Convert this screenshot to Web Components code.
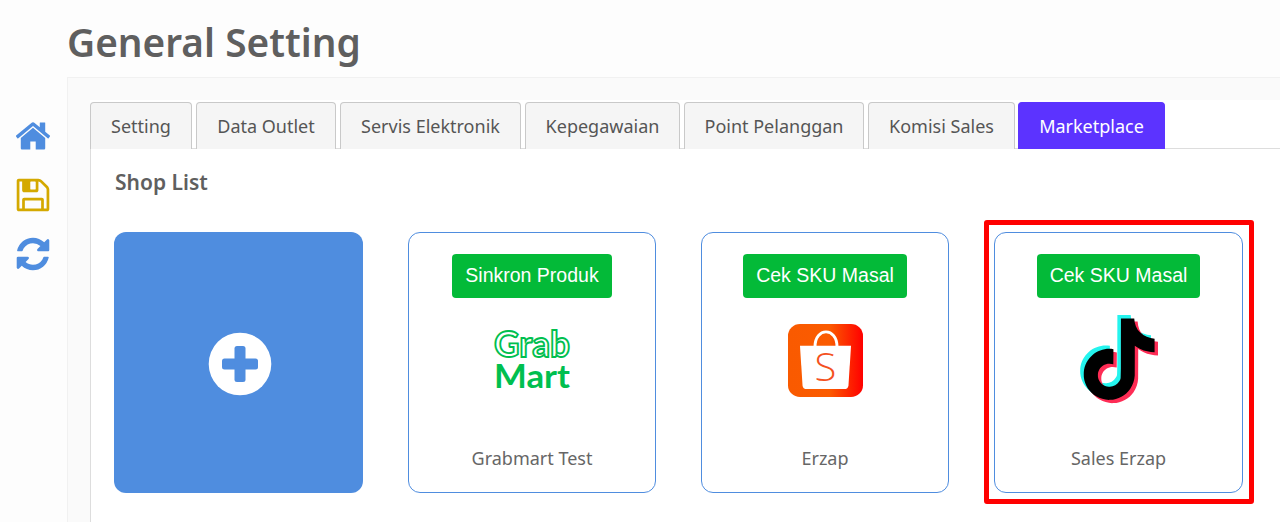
<!DOCTYPE html>
<html>
<head>
<meta charset="utf-8">
<title>General Setting</title>
<style>
  html, body { margin: 0; height: 522px; overflow: hidden; }
  body { background: #fdfdfd; color: #5f5f5f; font-family: "Noto Sans", sans-serif; }
</style>
</head>
<body>
<setting-page>
  <span slot="title">General Setting</span>
  <side-rail slot="rail"></side-rail>
  <tab-bar slot="tabs">
    <tab-item>Setting</tab-item>
    <tab-item>Data Outlet</tab-item>
    <tab-item>Servis Elektronik</tab-item>
    <tab-item>Kepegawaian</tab-item>
    <tab-item>Point Pelanggan</tab-item>
    <tab-item>Komisi Sales</tab-item>
    <tab-item active>Marketplace</tab-item>
  </tab-bar>
  <shop-list slot="content">
    <span slot="heading">Shop List</span>
    <shop-add></shop-add>
    <shop-card action="Sinkron Produk" name="Grabmart Test" logo="grab"></shop-card>
    <shop-card action="Cek SKU Masal" name="Erzap" logo="shopee"></shop-card>
    <shop-card action="Cek SKU Masal" name="Sales Erzap" logo="tiktok" marked></shop-card>
  </shop-list>
</setting-page>

<script>
class SettingPage extends HTMLElement {
    constructor() {
        super();
        this._shadowRoot = this.attachShadow({mode: "open"});
        this._shadowRoot.innerHTML = `
            <style>
                :host { display: block; height: 522px; overflow: hidden; }
                h1 {
                    margin: 0;
                    height: 77px;
                    padding-left: 67px;
                    box-sizing: border-box;
                    font-size: 38.8px;
                    line-height: 84px;
                    font-weight: 600;
                    color: #5f5f5f;
                }
                .body { display: flex; }
                .rail { flex: 0 0 65px; padding-right: 2px; }
                .panel {
                    flex: 1;
                    height: 445px;
                    box-sizing: border-box;
                    background: #fafafa;
                    border: solid #f1f1f1;
                    border-width: 1px 0 0 1px;
                    padding: 22px 0 0 22px;
                }
                .sheet {
                    display: flex;
                    flex-direction: column;
                    background: #fff;
                    height: 100%;
                    padding-top: 2px;
                    box-sizing: border-box;
                }
                .content { flex: 1; border-left: 1px solid #ddd; }
            </style>
            <h1><slot name="title"></slot></h1>
            <div class="body">
                <div class="rail"><slot name="rail"></slot></div>
                <div class="panel">
                    <div class="sheet">
                        <slot name="tabs"></slot>
                        <div class="content"><slot name="content"></slot></div>
                    </div>
                </div>
            </div>
        `;
    }
}

class SideRail extends HTMLElement {
    constructor() {
        super();
        this._shadowRoot = this.attachShadow({mode: "open"});
        this._shadowRoot.innerHTML = `
            <style>
                :host { display: flex; flex-direction: column; align-items: center; gap: 21px; padding-top: 40px; }
                svg { display: block; width: 38px; height: 38px; }
            </style>
            <svg viewBox="0 0 1792 1792" fill="#4f8ddf"><path d="M1472 992v480q0 26-19 45t-45 19h-384v-384h-256v384h-384q-26 0-45-19t-19-45v-480q0-1 .5-3t.5-3l575-474 575 474q1 2 1 6zm223-69l-62 74q-8 9-21 11h-3q-13 0-21-7l-692-577-692 577q-12 8-24 7-13-2-21-11l-62-74q-8-10-7-23.5t11-21.5l719-599q32-26 76-26t76 26l244 204v-195q0-14 9-23t23-9h192q14 0 23 9t9 23v408l219 182q10 8 11 21.5t-7 23.5z"/></svg>
            <svg viewBox="0 0 1792 1792" fill="#d4a900"><path d="M512 1536h768v-384h-768v384zm896 0h128v-896q0-14-10-38.5t-20-34.5l-281-281q-10-10-34-20t-39-10v416q0 40-28 68t-68 28h-576q-40 0-68-28t-28-68v-416h-128v1280h128v-416q0-40 28-68t68-28h832q40 0 68 28t28 68v416zm-384-928v-320q0-13-9.5-22.5t-22.5-9.5h-192q-13 0-22.5 9.5t-9.5 22.5v320q0 13 9.5 22.5t22.5 9.5h192q13 0 22.5-9.5t9.5-22.5zm640 32v928q0 40-28 68t-68 28h-1344q-40 0-68-28t-28-68v-1344q0-40 28-68t68-28h928q40 0 88 20t76 48l280 280q28 28 48 76t20 88z"/></svg>
            <svg viewBox="0 0 1792 1792" fill="#4f8ddf"><path d="M1639 1056q0 5-1 7-64 268-268 434.5t-478 166.5q-146 0-282.500-55t-243.500-157l-129 129q-19 19-45 19t-45-19-19-45v-448q0-26 19-45t45-19h448q26 0 45 19t19 45-19 45l-137 137q71 66 161 102t187 36q134 0 250-65t186-179q11-17 53-117 8-23 30-23h192q13 0 22.500 9.500t9.500 22.500zm25-800v448q0 26-19 45t-45 19h-448q-26 0-45-19t-19-45 19-45l138-138q-148-137-349-137-134 0-250 65t-186 179q-11 17-53 117-8 23-30 23h-199q-13 0-22.500-9.500t-9.500-22.500v-7q65-268 270-434.500t480-166.500q146 0 284 55.500t245 156.500l130-129q19-19 45-19t45 19 19 45z"/></svg>
        `;
    }
}

class TabBar extends HTMLElement {
    constructor() {
        super();
        this._shadowRoot = this.attachShadow({mode: "open"});
        this._shadowRoot.innerHTML = `
            <style>
                :host {
                    display: grid;
                    grid-template-columns: 102px 140px 181px 155px 180px 147px 146px;
                    column-gap: 4px;
                    justify-content: start;
                    height: 47px;
                    box-sizing: border-box;
                    border-bottom: 1px solid #ddd;
                }
            </style>
            <slot></slot>
        `;
    }
}

class TabItem extends HTMLElement {
    constructor() {
        super();
        this._shadowRoot = this.attachShadow({mode: "open"});
        this._shadowRoot.innerHTML = `
            <style>
                :host {
                    display: block;
                    height: 47px;
                    box-sizing: border-box;
                    background: #f5f5f5;
                    border: 1px solid #c9c9c9;
                    border-bottom: 0;
                    border-radius: 4px 4px 0 0;
                    font-size: 18px;
                    line-height: 47px;
                    text-align: center;
                    color: #555;
                    white-space: nowrap;
                }
                :host([active]) {
                    margin-left: -1px;
                    background: #5c33ff;
                    border-color: #5c33ff;
                    color: #fff;
                }
            </style>
            <slot></slot>
        `;
    }
}

class ShopList extends HTMLElement {
    constructor() {
        super();
        this._shadowRoot = this.attachShadow({mode: "open"});
        this._shadowRoot.innerHTML = `
            <style>
                :host { display: block; padding: 0 23px; }
                h2 { margin: 0; height: 83px; padding-left: 1px; font-size: 21px; line-height: 66px; font-weight: 600; color: #5f5f5f; }
                .grid { display: grid; grid-template-columns: 249px 248px 248px 249px; gap: 45px; }
            </style>
            <h2><slot name="heading"></slot></h2>
            <div class="grid"><slot></slot></div>
        `;
    }
}

class ShopAdd extends HTMLElement {
    constructor() {
        super();
        this._shadowRoot = this.attachShadow({mode: "open"});
        this._shadowRoot.innerHTML = `
            <style>
                :host {
                    display: flex;
                    align-items: center;
                    justify-content: center;
                    height: 261px;
                    box-sizing: border-box;
                    padding: 2px 0 0 3px;
                    background: #4f8ddf;
                    border-radius: 12px;
                }
                svg { width: 64px; height: 64px; }
            </style>
            <svg viewBox="0 0 64 64">
                <circle cx="32" cy="32" r="31.3" fill="#fff"/>
                <rect x="14" y="26.500" width="36" height="11" rx="2.500" fill="#4f8ddf"/>
                <rect x="26.500" y="14" width="11" height="36" rx="2.500" fill="#4f8ddf"/>
            </svg>
        `;
    }
}

const LOGOS = {
    grab: `
        <svg width="80" height="80" viewBox="0 0 80 80">
            <text x="40" y="37" text-anchor="middle" textLength="76" lengthAdjust="spacingAndGlyphs"
                font-family="Lato, sans-serif" font-weight="700" font-size="36"
                fill="#fff" stroke="#00bf4f" stroke-width="1.900">Grab</text>
            <text x="40" y="67.500" text-anchor="middle" textLength="76" lengthAdjust="spacingAndGlyphs"
                font-family="Lato, sans-serif" font-weight="700" font-size="33" fill="#00bf4f">Mart</text>
        </svg>`,
    shopee: `
        <svg width="75" height="73" viewBox="0 0 75 74" preserveAspectRatio="none" style="margin-top:1px">
            <defs>
                <linearGradient id="shopeeBg" x1="0" x2="1" y1="0" y2="0">
                    <stop offset="0" stop-color="#f95a00"/>
                    <stop offset=".55" stop-color="#fb5b00"/>
                    <stop offset="1" stop-color="#ff0000"/>
                </linearGradient>
            </defs>
            <rect width="75" height="74" rx="12" fill="url(#shopeeBg)"/>
            <path d="M27 23c0-20 22-20 22 0" fill="none" stroke="#fff" stroke-width="3"/>
            <path d="M12 22h51l-2.500 40q-.3 4-4.500 4h-37q-4.200 0-4.500-4z" fill="#fff"/>
            <text x="37.500" y="58" text-anchor="middle" font-family="'Open Sans', sans-serif" font-weight="300" font-size="40" fill="#f4511e">S</text>
        </svg>`,
    tiktok: `
        <svg width="90" height="90" viewBox="0 0 26.500 26.500">
            <defs>
                <path id="ttNote" d="M12.525.02c1.31-.02 2.61-.01 3.91-.02.08 1.53.63 3.09 1.75 4.17 1.12 1.11 2.7 1.62 4.24 1.79v4.03c-1.44-.05-2.89-.35-4.2-.97-.57-.26-1.1-.59-1.62-.93-.01 2.92.01 5.84-.02 8.75-.08 1.4-.54 2.79-1.35 3.94-1.31 1.92-3.58 3.17-5.91 3.21-1.43.08-2.86-.31-4.08-1.03-2.02-1.19-3.44-3.37-3.65-5.71-.02-.5-.03-1-.01-1.49.18-1.9 1.12-3.72 2.58-4.96 1.66-1.44 3.98-2.13 6.15-1.72.02 1.48-.04 2.96-.04 4.44-.99-.32-2.15-.23-3.02.37-.63.41-1.11 1.04-1.36 1.75-.21.51-.15 1.07-.14 1.61.24 1.64 1.82 3.02 3.5 2.87 1.12-.01 2.19-.66 2.77-1.61.19-.33.4-.67.41-1.06.1-1.79.06-3.57.07-5.36.01-4.03-.01-8.05.02-12.07z"/>
            </defs>
            <use href="#ttNote" x="0.250" y="0" fill="#25f4ee"/>
            <use href="#ttNote" x="2.300" y="1.950" fill="#fe2c55"/>
            <use href="#ttNote" x="1.300" y="1" fill="#000"/>
        </svg>`
};

class ShopCard extends HTMLElement {
    constructor() {
        super();
        this._shadowRoot = this.attachShadow({mode: "open"});
    }
    connectedCallback() {
        this.render();
    }
    render() {
        this._shadowRoot.innerHTML = `
            <style>
                :host {
                    position: relative;
                    display: flex;
                    flex-direction: column;
                    align-items: center;
                    height: 261px;
                    box-sizing: border-box;
                    padding-top: 21px;
                    background: #fff;
                    border: 1px solid #4f8ddf;
                    border-radius: 12px;
                }
                button {
                    height: 44px;
                    padding: 0 13px 2px;
                    border: 0;
                    border-radius: 4px;
                    background: #03ba38;
                    color: #fff;
                    font-family: "Liberation Sans", Arial, sans-serif;
                    font-size: 19.5px;
                }
                .logo {
                    display: flex;
                    align-items: center;
                    justify-content: center;
                    height: 100px;
                    margin-top: 12px;
                }
                .name { margin-top: 36px; font-size: 18px; line-height: 25px; color: #666; }
                .mark {
                    position: absolute;
                    inset: -13px -12px -12px -11px;
                    border: 5px solid #ff0000;
                    border-radius: 3px;
                    pointer-events: none;
                }
            </style>
            <button>${this.getAttribute("action")}</button>
            <div class="logo">${LOGOS[this.getAttribute("logo")]}</div>
            <div class="name">${this.getAttribute("name")}</div>
            ${this.hasAttribute("marked") ? '<div class="mark"></div>' : ""}
        `;
    }
}

customElements.define("setting-page", SettingPage);
customElements.define("side-rail", SideRail);
customElements.define("tab-bar", TabBar);
customElements.define("tab-item", TabItem);
customElements.define("shop-list", ShopList);
customElements.define("shop-add", ShopAdd);
customElements.define("shop-card", ShopCard);
</script>
</body>
</html>
